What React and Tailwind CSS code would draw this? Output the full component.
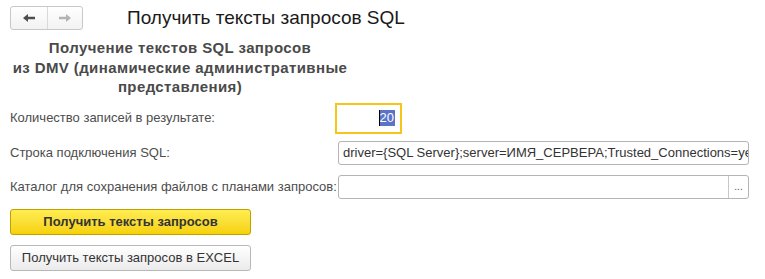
// Форма "Получить тексты запросов SQL"
export default function App() {
  const font = { fontFamily: '"Liberation Sans", Arial, sans-serif' };

  return (
    <div className="w-[765px] h-[279px] bg-white relative overflow-hidden text-[#333]" style={font}>
      {/* Header */}
      <div className="flex items-center h-[36px] pl-[10px] pt-[6px] pb-[6px]">
        <div className="flex h-[24px] w-[73px] rounded-[3px] border border-[#c8c8c8] bg-gradient-to-b from-white to-[#f2f2f2]">
          <div className="flex w-[37px] items-center justify-center border-r border-[#d9d9d9]">
            <svg width="14" height="10" viewBox="0 0 14 10">
              <path d="M1 5 L6 1 L6 3.8 L13 3.8 L13 6.2 L6 6.2 L6 9 Z" fill="#4d4d4d" />
            </svg>
          </div>
          <div className="flex flex-1 items-center justify-center">
            <svg width="14" height="10" viewBox="0 0 14 10">
              <path d="M13 5 L8 1 L8 3.8 L1 3.8 L1 6.2 L8 6.2 L8 9 Z" fill="#b3b3b3" />
            </svg>
          </div>
        </div>
        <h1 className="ml-[44px] text-[19px] leading-[24px] text-[#1a1a1a]">Получить тексты запросов SQL</h1>
      </div>

      {/* Subheading */}
      <div className="w-[340px] ml-[10px] mt-[2px] text-center text-[15px] font-bold tracking-[0.4px] leading-[19.5px] text-[#4a4a4a]">
        Получение текстов SQL запросов
        <br />
        из DMV (динамические административные
        <br />
        представления)
      </div>

      {/* Form */}
      <div className="ml-[10px] mt-[6px] flex flex-col text-[13px]">
        <div className="flex items-center h-[31px]">
          <div className="w-[325px] text-[#4d4d4d]">Количество записей в результате:</div>
          <div className="flex h-[31px] w-[67px] items-center justify-end border-2 border-[#f5c518] pr-[5px]">
            <span className="relative bg-[#5b74c8] px-[1px] leading-[16px] text-white">
              <span className="absolute left-0 top-0 h-[16px] w-[1px] bg-black" />
              20
            </span>
          </div>
        </div>

        <div className="flex items-center h-[24px] mt-[7px]">
          <div className="w-[328px] text-[#4d4d4d]">Строка подключения SQL:</div>
          <div className="flex h-[24px] w-[411px] items-center overflow-hidden whitespace-nowrap rounded-[3px] border border-[#b5b5b5] pl-[4px] text-[#333]">
            driver={'{'}SQL Server{'}'};server=ИМЯ_СЕРВЕРА;Trusted_Connections=yes
          </div>
        </div>

        <div className="flex items-center h-[24px] mt-[10px]">
          <div className="w-[328px] text-[#4d4d4d]">Каталог для сохранения файлов с планами запросов:</div>
          <div className="flex h-[24px] w-[411px] rounded-[3px] border border-[#b5b5b5]">
            <div className="flex-1" />
            <div className="flex w-[20px] items-center justify-center border-l border-[#c8c8c8] text-[10px] text-[#555]">...</div>
          </div>
        </div>

        <button className="mt-[10px] flex h-[26px] w-[241px] items-center justify-center rounded-[3px] border border-[#c2a000] bg-gradient-to-b from-[#ffed4f] to-[#f6d100] font-bold text-[#333]">
          Получить тексты запросов
        </button>

        <button className="mt-[10px] flex h-[26px] w-[241px] items-center justify-center rounded-[3px] border border-[#b8b8b8] bg-gradient-to-b from-white to-[#ebebeb] text-[#333]">
          Получить тексты запросов в EXCEL
        </button>
      </div>
    </div>
  );
}
